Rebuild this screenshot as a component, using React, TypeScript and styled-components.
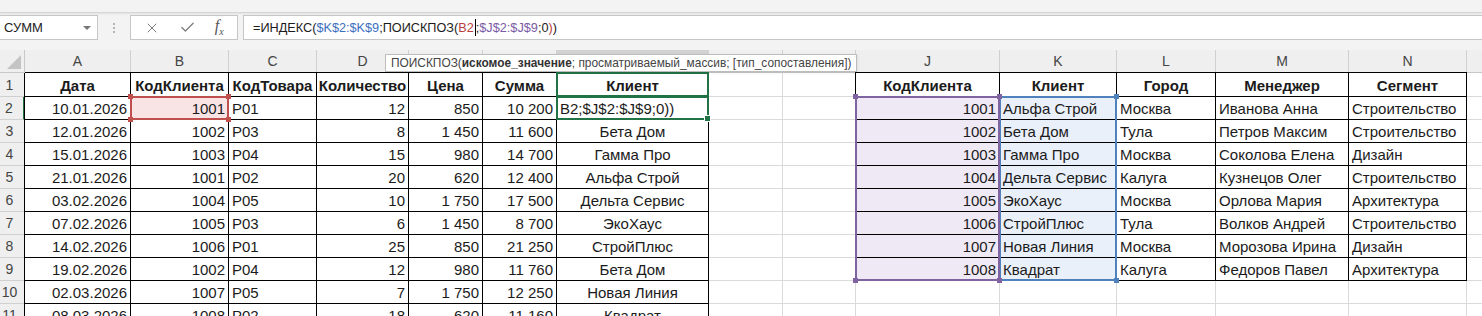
import React from "react";
import styled, { createGlobalStyle } from "styled-components";
import { X, Check } from "lucide-react";

const GlobalStyle = createGlobalStyle`
  html, body {
    margin: 0;
    padding: 0;
    overflow: hidden;
    background: #ffffff;
  }
  body {
    font-family: "Liberation Sans", Arial, sans-serif;
  }
`;

const Window = styled.div`
  width: 1482px;
  height: 316px;
  overflow: hidden;
  display: flex;
  flex-direction: column;
  background: #f3f3f3;
  & > * {
    flex-shrink: 0;
  }
`;

const RibbonEdge = styled.div`
  height: 12px;
  background: #f3f3f3;
  border-bottom: 1px solid #d6d6d6;
  box-shadow: 0 1px 2px rgba(0, 0, 0, 0.08);
`;

const FormulaBar = styled.div`
  display: flex;
  align-items: stretch;
  height: 25px;
  margin-top: 2px;
  margin-bottom: 10px;
`;

const NameBox = styled.div`
  box-sizing: border-box;
  width: 98px;
  display: flex;
  align-items: center;
  justify-content: space-between;
  padding: 0 6px 0 4px;
  background: #fff;
  border: 1px solid #c6c6c6;
  border-left: none;
  font-size: 13px;
  color: #222;
`;

const DropArrow = styled.span`
  width: 0;
  height: 0;
  border-left: 4px solid transparent;
  border-right: 4px solid transparent;
  border-top: 4px solid #777;
`;

const Grip = styled.div`
  width: 32px;
  display: flex;
  flex-direction: column;
  align-items: center;
  justify-content: center;
  gap: 2px;
`;

const GripDot = styled.span`
  width: 2px;
  height: 2px;
  background: #b4b4b4;
`;

const ButtonsBox = styled.div`
  box-sizing: border-box;
  width: 108px;
  display: flex;
  align-items: center;
  justify-content: space-around;
  padding: 0 4px;
  background: #fff;
  border: 1px solid #c6c6c6;
  margin-right: 5px;
  color: #7a7a7a;
`;

const FxLabel = styled.span`
  font-family: "Liberation Serif", "Times New Roman", serif;
  font-style: italic;
  font-size: 16px;
  color: #555;
  sub {
    font-size: 10px;
  }
`;

const FormulaInput = styled.div`
  box-sizing: border-box;
  flex: 1;
  display: flex;
  align-items: center;
  padding-left: 9px;
  background: #fff;
  border: 1px solid #c6c6c6;
  border-right: none;
  font-size: 12.7px;
  color: #1b1b1b;
  white-space: pre;
`;

const Token = styled.span<{ $c?: string }>`
  color: ${(p) => p.$c ?? "#1b1b1b"};
`;

const Caret = styled.span`
  display: inline-block;
  width: 1px;
  height: 17px;
  background: #000;
  vertical-align: middle;
  margin: 0 0 0 1px;
`;

const Sheet = styled.div`
  display: grid;
  grid-template-columns: 25px 106px 98px 88px 92px 74px 74px 152px 74px 73px 144px 117px 99px 133px 118px 100px;
  grid-template-rows: 23px 24px repeat(10, 23px);
  background: #fff;
`;

// every sheet part is placed on the grid by row/column number
type Placed = { $gr: number; $gc: number };

const Corner = styled.div`
  grid-row: 1;
  grid-column: 1;
  position: relative;
  background: #efefef;
  border-right: 1px solid #c8c8c8;
  border-bottom: 1px solid #c8c8c8;
  &::after {
    content: "";
    position: absolute;
    right: 3px;
    bottom: 3px;
    width: 0;
    height: 0;
    border-left: 14px solid transparent;
    border-bottom: 14px solid #c4c4c4;
  }
`;

const ColHead = styled.div<Placed & { $active?: boolean }>`
  grid-row: ${(p) => p.$gr};
  grid-column: ${(p) => p.$gc};
  box-sizing: border-box;
  display: flex;
  align-items: center;
  justify-content: center;
  background: ${(p) => (p.$active ? "#d2d2d2" : "#efefef")};
  border-right: 1px solid #d0d0d0;
  border-bottom: ${(p) => (p.$active ? "2px solid #217346" : "1px solid #c8c8c8")};
  font-size: 14px;
  color: #444;
`;

const RowHead = styled.div<Placed & { $active?: boolean }>`
  grid-row: ${(p) => p.$gr};
  grid-column: ${(p) => p.$gc};
  box-sizing: border-box;
  display: flex;
  align-items: center;
  justify-content: center;
  padding-right: 5px;
  background: #efefef;
  border-right: ${(p) => (p.$active ? "2px solid #217346" : "1px solid #c8c8c8")};
  border-bottom: 1px solid #d0d0d0;
  font-size: 14px;
  color: #444;
`;

type Align = "left" | "right" | "center";

const Cell = styled.div<
  Placed & {
    $align: Align;
    $bold?: boolean;
    $table?: boolean;
    $edgeLeft?: boolean;
    $edgeTop?: boolean;
    $fill?: string;
  }
>`
  grid-row: ${(p) => p.$gr};
  grid-column: ${(p) => p.$gc};
  box-sizing: border-box;
  min-width: 0;
  display: flex;
  align-items: center;
  justify-content: ${(p) =>
    p.$align === "right" ? "flex-end" : p.$align === "center" ? "center" : "flex-start"};
  padding: 1px 3px 0;
  white-space: nowrap;
  overflow: hidden;
  font-size: 15px;
  font-weight: ${(p) => (p.$bold ? 700 : 400)};
  color: #1b1b1b;
  background: ${(p) => p.$fill ?? "#fff"};
  border-right: 1px solid ${(p) => (p.$table ? "#000" : "#dadada")};
  border-bottom: 1px solid ${(p) => (p.$table ? "#000" : "#dadada")};
  box-shadow: ${(p) => {
    const s: string[] = [];
    if (p.$edgeLeft) s.push("-1px 0 0 #000");
    if (p.$edgeTop) s.push("0 -1px 0 #000", "-1px -1px 0 #000");
    return s.length ? s.join(", ") : "none";
  }};
`;

const RangeBox = styled.div<{ $col: string; $row: string; $color: string }>`
  grid-column: ${(p) => p.$col};
  grid-row: ${(p) => p.$row};
  position: relative;
  z-index: 2;
  box-sizing: border-box;
  margin: -1px 0 0 -1px;
  border: 2px solid ${(p) => p.$color};
  pointer-events: none;
`;

const Handle = styled.span<{ $color: string; $x: "l" | "r"; $y: "t" | "b" }>`
  position: absolute;
  width: 5px;
  height: 5px;
  background: ${(p) => p.$color};
  ${(p) => (p.$x === "l" ? "left: -4px;" : "right: -4px;")}
  ${(p) => (p.$y === "t" ? "top: -4px;" : "bottom: -4px;")}
`;

const FillHandle = styled.span`
  position: absolute;
  right: -4px;
  bottom: -4px;
  width: 5px;
  height: 5px;
  background: #217346;
  border: 1px solid #fff;
`;

const Tooltip = styled.div`
  grid-column: 5 / 11;
  grid-row: 1;
  align-self: center;
  justify-self: start;
  z-index: 3;
  box-sizing: border-box;
  width: 472px;
  height: 18px;
  margin-left: 68px;
  margin-top: 2px;
  display: flex;
  align-items: center;
  padding: 0 5px;
  background: #fff;
  border: 1px solid #bdbdbd;
  box-shadow: 1px 1px 2px rgba(0, 0, 0, 0.08);
  font-size: 11.9px;
  color: #444;
  white-space: pre;
  b {
    color: #333;
  }
`;

const RED = "#c0504d";
const PURPLE = "#8064a2";
const BLUE = "#4f81bd";
const GREEN = "#217346";

const letters = ["A", "B", "C", "D", "E", "F", "G", "H", "I", "J", "K", "L", "M", "N", "O"];

const leftHead = ["Дата", "КодКлиента", "КодТовара", "Количество", "Цена", "Сумма", "Клиент"];
const leftAlign: Align[] = ["right", "right", "left", "right", "right", "right", "center"];
const sales = [
  ["10.01.2026", "1001", "P01", "12", "850", "10 200", "B2;$J$2:$J$9;0))"],
  ["12.01.2026", "1002", "P03", "8", "1 450", "11 600", "Бета Дом"],
  ["15.01.2026", "1003", "P04", "15", "980", "14 700", "Гамма Про"],
  ["21.01.2026", "1001", "P02", "20", "620", "12 400", "Альфа Строй"],
  ["03.02.2026", "1004", "P05", "10", "1 750", "17 500", "Дельта Сервис"],
  ["07.02.2026", "1005", "P03", "6", "1 450", "8 700", "ЭкоХаус"],
  ["14.02.2026", "1006", "P01", "25", "850", "21 250", "СтройПлюс"],
  ["19.02.2026", "1002", "P04", "12", "980", "11 760", "Бета Дом"],
  ["02.03.2026", "1007", "P05", "7", "1 750", "12 250", "Новая Линия"],
  ["08.03.2026", "1008", "P02", "18", "620", "11 160", "Квадрат"],
];

const rightHead = ["КодКлиента", "Клиент", "Город", "Менеджер", "Сегмент"];
const rightAlign: Align[] = ["right", "left", "left", "left", "left"];
const clients = [
  ["1001", "Альфа Строй", "Москва", "Иванова Анна", "Строительство"],
  ["1002", "Бета Дом", "Тула", "Петров Максим", "Строительство"],
  ["1003", "Гамма Про", "Москва", "Соколова Елена", "Дизайн"],
  ["1004", "Дельта Сервис", "Калуга", "Кузнецов Олег", "Строительство"],
  ["1005", "ЭкоХаус", "Москва", "Орлова Мария", "Архитектура"],
  ["1006", "СтройПлюс", "Тула", "Волков Андрей", "Строительство"],
  ["1007", "Новая Линия", "Москва", "Морозова Ирина", "Дизайн"],
  ["1008", "Квадрат", "Калуга", "Федоров Павел", "Архитектура"],
];

const renderCell = (row: number, col: number) => {
  // row: 1..11, col: 0 (A) .. 14 (O); grid row/col are shifted by the headers
  const key = `${row}-${col}`;
  const gr = row + 1;
  const gc = col + 2;
  if (col <= 6) {
    const isHead = row === 1;
    const text = isHead ? leftHead[col] : sales[row - 2]?.[col] ?? "";
    const align: Align = isHead ? "center" : row === 2 && col === 6 ? "left" : leftAlign[col];
    return (
      <Cell
        key={key}
        $gr={gr}
        $gc={gc}
        $align={align}
        $bold={isHead}
        $table
        $edgeLeft={col === 0}
        $edgeTop={isHead}
        $fill={row === 2 && col === 1 ? "#f8e4e5" : undefined}
      >
        {text}
      </Cell>
    );
  }
  if (col >= 9 && col <= 13 && row <= 9) {
    const c = col - 9;
    const isHead = row === 1;
    const text = isHead ? rightHead[c] : clients[row - 2][c];
    let fill: string | undefined;
    if (!isHead && c === 0) fill = "#eee9f5";
    if (!isHead && c === 1) fill = "#e9f0fa";
    return (
      <Cell
        key={key}
        $gr={gr}
        $gc={gc}
        $align={isHead ? "center" : rightAlign[c]}
        $bold={isHead}
        $table
        $edgeLeft={c === 0}
        $edgeTop={isHead}
        $fill={fill}
      >
        {text}
      </Cell>
    );
  }
  return <Cell key={key} $gr={gr} $gc={gc} $align="left" />;
};

const Corners = ({ color }: { color: string }) => (
  <>
    <Handle $color={color} $x="l" $y="t" />
    <Handle $color={color} $x="r" $y="t" />
    <Handle $color={color} $x="l" $y="b" />
    <Handle $color={color} $x="r" $y="b" />
  </>
);

const App: React.FC = () => {
  const rows = Array.from({ length: 11 }, (_, i) => i + 1);

  return (
    <Window>
      <GlobalStyle />
      <RibbonEdge />
      <FormulaBar>
        <NameBox>
          СУММ
          <DropArrow />
        </NameBox>
        <Grip>
          <GripDot />
          <GripDot />
          <GripDot />
        </Grip>
        <ButtonsBox>
          <X size={16} strokeWidth={1.5} />
          <Check size={17} strokeWidth={1.7} />
          <FxLabel>
            f<sub>x</sub>
          </FxLabel>
        </ButtonsBox>
        <FormulaInput>
          <Token>=ИНДЕКС(</Token>
          <Token $c="#3d6fc0">$K$2:$K$9</Token>
          <Token>;ПОИСКПОЗ(</Token>
          <Token $c="#b8403d">B2</Token>
          <Caret />
          <Token>;</Token>
          <Token $c="#7a5ca6">$J$2:$J$9</Token>
          <Token>;0</Token>
          <Token $c="#b8403d">)</Token>
          <Token>)</Token>
        </FormulaInput>
      </FormulaBar>

      <Sheet>
        <Corner />
        {letters.map((l, i) => (
          <ColHead key={l} $gr={1} $gc={i + 2} $active={i === 6}>
            {l}
          </ColHead>
        ))}
        {rows.map((r) => (
          <React.Fragment key={r}>
            <RowHead $gr={r + 1} $gc={1} $active={r === 2}>
              {r}
            </RowHead>
            {letters.map((_, c) => renderCell(r, c))}
          </React.Fragment>
        ))}

        <Tooltip>
          ПОИСКПОЗ(<b>искомое_значение</b>; просматриваемый_массив; [тип_сопоставления])
        </Tooltip>

        <RangeBox $col="3 / 4" $row="3 / 4" $color={RED}>
          <Corners color={RED} />
        </RangeBox>
        <RangeBox $col="12 / 13" $row="3 / 11" $color={BLUE}>
          <Corners color={BLUE} />
        </RangeBox>
        <RangeBox $col="11 / 12" $row="3 / 11" $color={PURPLE}>
          <Corners color={PURPLE} />
        </RangeBox>
        <RangeBox $col="8 / 9" $row="2 / 3" $color={GREEN} />
        <RangeBox $col="8 / 9" $row="3 / 4" $color={GREEN}>
          <FillHandle />
        </RangeBox>
      </Sheet>
    </Window>
  );
};

export default App;
